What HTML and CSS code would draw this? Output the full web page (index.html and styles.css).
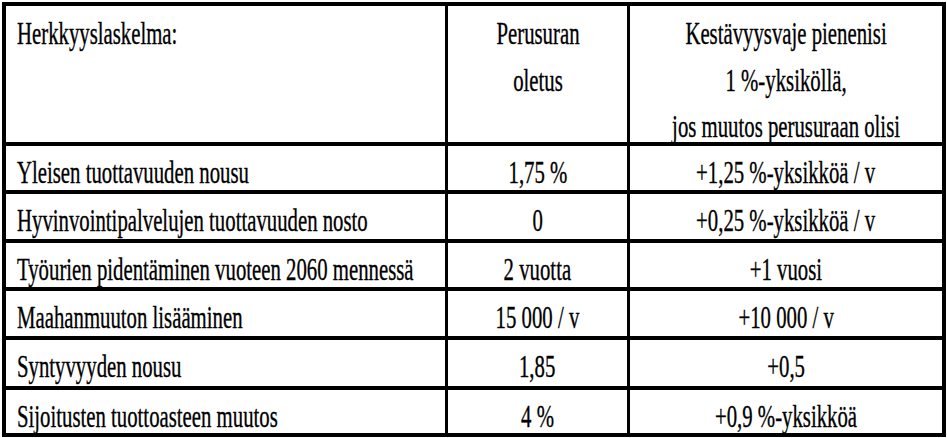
FILE: index.html
```html
<!DOCTYPE html>
<html lang="fi">
<head>
<meta charset="utf-8">
<title>Herkkyyslaskelma</title>
<link rel="stylesheet" href="styles.css">
</head>
<body>
<div class="table">
  <div class="cell head left"><span class="t">Herkkyyslaskelma:</span></div>
  <div class="cell head mid"><span class="t">Perusuran<br>oletus</span></div>
  <div class="cell head mid"><span class="t">Kestävyysvaje pienenisi<br>1 %-yksiköllä,<br>jos muutos perusuraan olisi</span></div>

  <div class="cell left"><span class="t">Yleisen tuottavuuden nousu</span></div>
  <div class="cell mid"><span class="t">1,75 %</span></div>
  <div class="cell mid"><span class="t">+1,25 %-yksikköä / v</span></div>

  <div class="cell left"><span class="t">Hyvinvointipalvelujen tuottavuuden nosto</span></div>
  <div class="cell mid"><span class="t">0</span></div>
  <div class="cell mid"><span class="t">+0,25 %-yksikköä / v</span></div>

  <div class="cell left"><span class="t">Työurien pidentäminen vuoteen 2060 mennessä</span></div>
  <div class="cell mid"><span class="t">2 vuotta</span></div>
  <div class="cell mid"><span class="t">+1 vuosi</span></div>

  <div class="cell left"><span class="t">Maahanmuuton lisääminen</span></div>
  <div class="cell mid"><span class="t">15 000 / v</span></div>
  <div class="cell mid"><span class="t">+10 000 / v</span></div>

  <div class="cell left"><span class="t">Syntyvyyden nousu</span></div>
  <div class="cell mid"><span class="t">1,85</span></div>
  <div class="cell mid"><span class="t">+0,5</span></div>

  <div class="cell left"><span class="t">Sijoitusten tuottoasteen muutos</span></div>
  <div class="cell mid"><span class="t">4 %</span></div>
  <div class="cell mid"><span class="t">+0,9 %-yksikköä</span></div>
</div>
</body>
</html>
```
FILE: styles.css
```css
html, body {
  margin: 0;
  padding: 0;
  background: #fff;
}

body {
  font-family: "Liberation Serif", "Times New Roman", serif;
  font-size: 31px;
  color: #000;
}

.table {
  margin: 2px 0 0 2px;
  width: 944px;
  box-sizing: border-box;
  display: grid;
  grid-template-columns: 439px 179px 312px;
  grid-template-rows: 136px 44px 44.5px 44.5px 45px 46px 43px;
  column-gap: 3px;
  row-gap: 4px;
  padding: 4px;
  background: #000;
}

.cell {
  background: #fff;
  display: flex;
  flex-direction: column;
  padding-top: 12px;
  line-height: 30px;
  box-sizing: border-box;
  min-width: 0;
}

.cell.head {
  padding-top: 5px;
  line-height: 46.67px;
}

.t {
  display: block;
  white-space: nowrap;
  transform: scaleX(0.67);
  -webkit-text-stroke: 0.35px #000;
}

.left {
  align-items: flex-start;
  padding-left: 11px;
}

.left .t {
  transform-origin: left top;
}

.mid {
  align-items: center;
}

.mid .t {
  text-align: center;
  transform-origin: center top;
}
```
